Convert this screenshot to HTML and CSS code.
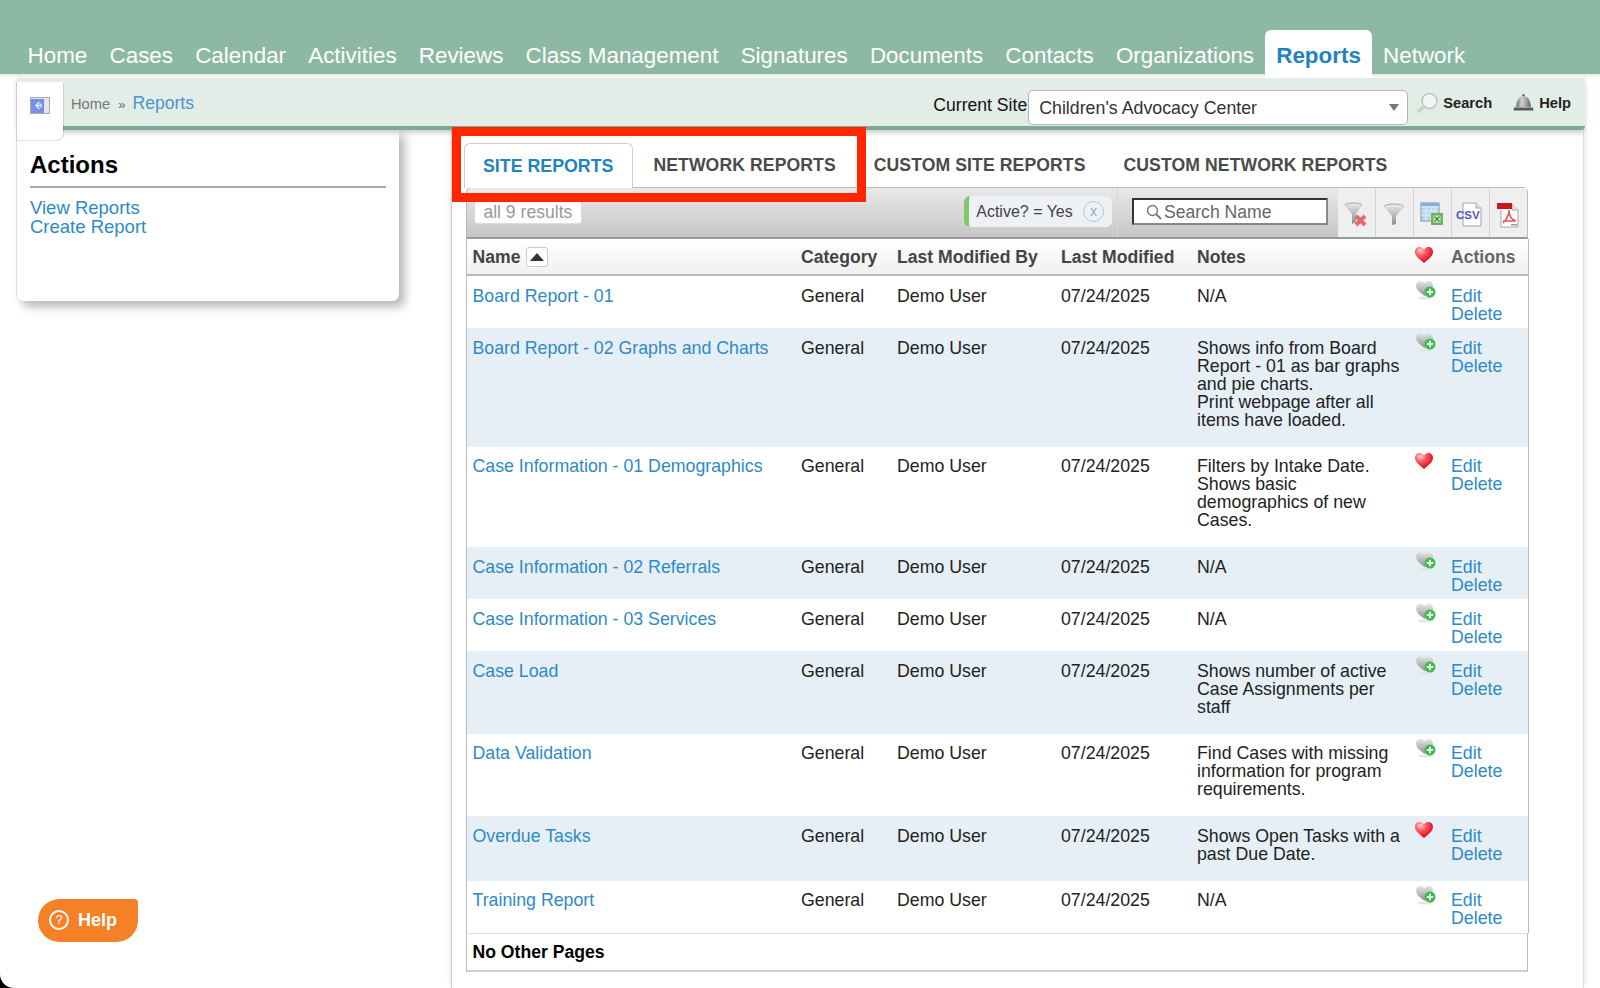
FILE: index.html
```html
<!DOCTYPE html>
<html lang="en">
<head>
<meta charset="utf-8">
<title>Reports</title>
<link rel="stylesheet" href="styles.css">
</head>
<body>
<svg class="defs" width="0" height="0" aria-hidden="true">
  <defs>
    <radialGradient id="redheart" cx=".3" cy=".22" r=".8"><stop offset="0" stop-color="#ffd0d2"/><stop offset=".35" stop-color="#f9646c"/><stop offset=".8" stop-color="#ea1f2c"/><stop offset="1" stop-color="#d8141f"/></radialGradient>
    <linearGradient id="grayheart" x1="0" y1="0" x2="0" y2="1"><stop offset="0" stop-color="#e8e8e8"/><stop offset="1" stop-color="#8f8f8f"/></linearGradient>
    <linearGradient id="funnel" x1="0" y1="0" x2="0" y2="1"><stop offset="0" stop-color="#dcdcdc"/><stop offset="1" stop-color="#8e8e8e"/></linearGradient>
    <linearGradient id="bell" x1="0" y1="0" x2="1" y2="0"><stop offset="0" stop-color="#6f6f72"/><stop offset=".4" stop-color="#d2d2d6"/><stop offset="1" stop-color="#65656a"/></linearGradient>
    <symbol id="heart-on" viewBox="0 0 18 16"><path d="M9 16C5 12.500 0 9.500 0 4.800 0 2 2.200 0 4.700 0 6.500 0 8.100 1 9 2.600 9.900 1 11.500 0 13.300 0 15.800 0 18 2 18 4.800 18 9.500 13 12.500 9 16Z" fill="url(#redheart)"/></symbol>
    <symbol id="heart-add" viewBox="0 0 20 20"><ellipse cx="9" cy="18" rx="7" ry="1.600" fill="#e6e6e6"/><path d="M8.500 16C5 13 0 10.500 0 5.300 0 2.600 2 .8 4.400 .8 6.200 .8 7.700 1.800 8.500 3.300 9.300 1.800 10.800 .8 12.600 .8 15 .8 17 2.600 17 5.300 17 10.500 12 13 8.500 16Z" fill="url(#grayheart)"/><circle cx="14" cy="12" r="5.500" fill="#3dbb4f"/><path d="M14 8.800v6.400M10.800 12h6.400" stroke="#eefaef" stroke-width="2"/></symbol>
  </defs>
</svg>
<div class="window">
  <header class="topnav">
    <nav class="tabs">
      <a class="tab" href="#">Home</a>
      <a class="tab" href="#">Cases</a>
      <a class="tab" href="#">Calendar</a>
      <a class="tab" href="#">Activities</a>
      <a class="tab" href="#">Reviews</a>
      <a class="tab" href="#">Class Management</a>
      <a class="tab" href="#">Signatures</a>
      <a class="tab" href="#">Documents</a>
      <a class="tab" href="#">Contacts</a>
      <a class="tab" href="#">Organizations</a>
      <a class="tab tab-active" href="#">Reports</a>
      <a class="tab" href="#">Network</a>
    </nav>
  </header>

  <div class="subbar">
    <div class="crumbs">
      <a class="crumb-home" href="#">Home</a>
      <span class="crumb-sep">»</span>
      <a class="crumb-current" href="#">Reports</a>
    </div>
    <div class="sitebox">
      <label class="site-label">Current Site</label>
      <div class="site-select">
        <span>Children's Advocacy Center</span>
        <span class="select-caret"></span>
      </div>
      <a class="util" href="#">
        <svg class="util-icon" width="21" height="20" viewBox="0 0 21 20"><circle cx="12.500" cy="8" r="7.500" fill="#f2f5f3" stroke="#bfc2bd" stroke-width="1.500"/><path d="M7 13.500 1.800 18.200" stroke="#cfd1c9" stroke-width="3.200" stroke-linecap="round"/></svg>
        Search
      </a>
      <a class="util util-help" href="#">
        <svg class="util-icon" width="21" height="17" viewBox="0 0 21 17"><circle cx="10.500" cy="1.500" r="1.500" fill="#6b6b6f"/><path d="M10.500 2C5.500 2.500 3.500 7 3 13H18C17.500 7 15.500 2.500 10.500 2Z" fill="url(#bell)"/><path d="M1 13.500H20L20.500 16.500H.5Z" fill="#59595c"/></svg>
        Help
      </a>
    </div>
  </div>

  <a class="panel-toggle" href="#" aria-label="Toggle panel">
    <svg width="20" height="17" viewBox="0 0 20 17"><rect x=".5" y=".5" width="19" height="16" fill="#e6e6e6" stroke="#aaa"/><rect x="1" y="2" width="13" height="14" fill="#7391e8"/><path d="M9.500 5 6 8.500 9.500 12M6 8.500h5M11 6.500v4" fill="none" stroke="#e6ebfb" stroke-width="1.400"/></svg>
  </a>

  <div class="content">
    <aside class="sidebar">
      <h2 class="side-title">Actions</h2>
      <div class="side-links">
        <a href="#">View Reports</a>
        <a href="#">Create Report</a>
      </div>
    </aside>

    <main class="main">
      <div class="report-tabs">
        <a class="rtab rtab-active" href="#">SITE REPORTS</a>
        <a class="rtab" href="#">NETWORK REPORTS</a>
        <a class="rtab" href="#">CUSTOM SITE REPORTS</a>
        <a class="rtab" href="#">CUSTOM NETWORK REPORTS</a>
      </div>

      <div class="grid">
        <div class="toolbar">
          <span class="count">all 9 results</span>
          <span class="chip">Active? = Yes <span class="chip-x">x</span></span>
          <div class="searchwrap">
            <div class="searchbox">
              <svg width="16" height="16" viewBox="0 0 16 16"><circle cx="6.500" cy="6.500" r="5" fill="none" stroke="#777" stroke-width="1.400"/><path d="M10 10l5 5" stroke="#777" stroke-width="1.800"/></svg>
              <span>Search Name</span>
            </div>
          </div>
          <div class="tools">
            <a class="tool" href="#" aria-label="Clear filters"><svg width="24" height="26" viewBox="0 0 24 26"><ellipse cx="9.500" cy="3" rx="8.500" ry="2" fill="#e4e4e4" stroke="#aaa"/><path d="M1 3.500H18L12 12V20L8 22V12Z" fill="url(#funnel)"/><path d="M12 14 21 23M21 14 12 23" stroke="#e5686a" stroke-width="4"/></svg></a>
            <a class="tool" href="#" aria-label="Filter"><svg width="22" height="24" viewBox="0 0 22 24"><ellipse cx="11" cy="3.500" rx="9.500" ry="2.500" fill="#e6e6e6" stroke="#a5a5a5"/><path d="M1.500 4 20.500 4 13 13V21L9 22V13Z" fill="url(#funnel)"/></svg></a>
            <a class="tool" href="#" aria-label="Export Excel"><svg width="24" height="25" viewBox="0 0 24 25"><rect x="1" y="1" width="18" height="18" fill="#b5d8f2" stroke="#8a8f94"/><path d="M1 5H19M1 9H19M1 13H19M6 1V19M11 1V19M15 1V19" stroke="#deedf8" stroke-width="1"/><rect x="1" y="1" width="18" height="3" fill="#7fb2da"/><rect x="11" y="11" width="12" height="12" fill="#6bb05c"/><rect x="13.500" y="13.500" width="7" height="7" fill="#d5ecc9"/><path d="M14.500 14.500 19.500 19.500M19.500 14.500 14.500 19.500" stroke="#3a8a30" stroke-width="1.300"/></svg></a>
            <a class="tool" href="#" aria-label="Export CSV"><svg width="28" height="25" viewBox="0 0 28 25"><path d="M7 1H20L25 6V24H7Z" fill="#fff" stroke="#a5a5a5"/><path d="M20 1V6H25" fill="#e5e5e5" stroke="#a5a5a5"/><text class="csv-text" x="0" y="17">CSV</text></svg></a>
            <a class="tool" href="#" aria-label="Export PDF"><svg width="24" height="26" viewBox="0 0 24 26"><path d="M5 2H16L22 8V25H5Z" fill="#fff" stroke="#a5a5a5"/><path d="M16 2V8H22" fill="#e8e8e8" stroke="#a5a5a5"/><rect x="1" y="1" width="15" height="6" fill="#c8161d"/><path d="M13 8C13 14 10 18 7 21M13 9C13 14 16 18 20 19M7 19H19" fill="none" stroke="#e0575b" stroke-width="1.600"/><rect x="15" y="22" width="6" height="1.500" fill="#999"/></svg></a>
          </div>
        </div>

        <table class="rtable">
          <colgroup>
            <col class="c-name"><col class="c-cat"><col class="c-by"><col class="c-date"><col class="c-notes"><col class="c-fav"><col class="c-act">
          </colgroup>
          <thead>
            <tr>
              <th><span class="th-name">Name <span class="sortbox"><span class="sort-arrow"></span></span></span></th>
              <th>Category</th>
              <th>Last Modified By</th>
              <th>Last Modified</th>
              <th>Notes</th>
              <th class="th-fav"><svg class="heart" width="18" height="16"><use href="#heart-on"/></svg></th>
              <th class="th-actions">Actions</th>
            </tr>
          </thead>
          <tbody>
            <tr>
              <td><a href="#">Board Report - 01</a></td><td>General</td><td>Demo User</td><td>07/24/2025</td>
              <td><p>N/A</p></td>
              <td class="fav"><svg class="heart heart-gray" width="20" height="20"><use href="#heart-add"/></svg></td>
              <td><a href="#">Edit</a><br><a href="#">Delete</a></td>
            </tr>
            <tr class="alt">
              <td><a href="#">Board Report - 02 Graphs and Charts</a></td><td>General</td><td>Demo User</td><td>07/24/2025</td>
              <td><p>Shows info from Board Report - 01 as bar graphs and pie charts.<br>Print webpage after all items have loaded.</p></td>
              <td class="fav"><svg class="heart heart-gray" width="20" height="20"><use href="#heart-add"/></svg></td>
              <td><a href="#">Edit</a><br><a href="#">Delete</a></td>
            </tr>
            <tr>
              <td><a href="#">Case Information - 01 Demographics</a></td><td>General</td><td>Demo User</td><td>07/24/2025</td>
              <td><p>Filters by Intake Date.<br>Shows basic demographics of new Cases.</p></td>
              <td class="fav"><svg class="heart" width="18" height="16"><use href="#heart-on"/></svg></td>
              <td><a href="#">Edit</a><br><a href="#">Delete</a></td>
            </tr>
            <tr class="alt">
              <td><a href="#">Case Information - 02 Referrals</a></td><td>General</td><td>Demo User</td><td>07/24/2025</td>
              <td><p>N/A</p></td>
              <td class="fav"><svg class="heart heart-gray" width="20" height="20"><use href="#heart-add"/></svg></td>
              <td><a href="#">Edit</a><br><a href="#">Delete</a></td>
            </tr>
            <tr>
              <td><a href="#">Case Information - 03 Services</a></td><td>General</td><td>Demo User</td><td>07/24/2025</td>
              <td><p>N/A</p></td>
              <td class="fav"><svg class="heart heart-gray" width="20" height="20"><use href="#heart-add"/></svg></td>
              <td><a href="#">Edit</a><br><a href="#">Delete</a></td>
            </tr>
            <tr class="alt">
              <td><a href="#">Case Load</a></td><td>General</td><td>Demo User</td><td>07/24/2025</td>
              <td><p>Shows number of active Case Assignments per staff</p></td>
              <td class="fav"><svg class="heart heart-gray" width="20" height="20"><use href="#heart-add"/></svg></td>
              <td><a href="#">Edit</a><br><a href="#">Delete</a></td>
            </tr>
            <tr>
              <td><a href="#">Data Validation</a></td><td>General</td><td>Demo User</td><td>07/24/2025</td>
              <td><p>Find Cases with missing information for program requirements.</p></td>
              <td class="fav"><svg class="heart heart-gray" width="20" height="20"><use href="#heart-add"/></svg></td>
              <td><a href="#">Edit</a><br><a href="#">Delete</a></td>
            </tr>
            <tr class="alt">
              <td><a href="#">Overdue Tasks</a></td><td>General</td><td>Demo User</td><td>07/24/2025</td>
              <td><p>Shows Open Tasks with a past Due Date.</p></td>
              <td class="fav"><svg class="heart" width="18" height="16"><use href="#heart-on"/></svg></td>
              <td><a href="#">Edit</a><br><a href="#">Delete</a></td>
            </tr>
            <tr>
              <td><a href="#">Training Report</a></td><td>General</td><td>Demo User</td><td>07/24/2025</td>
              <td><p>N/A</p></td>
              <td class="fav"><svg class="heart heart-gray" width="20" height="20"><use href="#heart-add"/></svg></td>
              <td><a href="#">Edit</a><br><a href="#">Delete</a></td>
            </tr>
          </tbody>
        </table>
        <div class="pages">No Other Pages</div>
      </div>
    </main>
  </div>

  <div class="annotation" aria-hidden="true"></div>

  <a class="help-float" href="#">
    <span class="help-circle">?</span>
    Help
  </a>
</div>
</body>
</html>
```

FILE: styles.css
```css
* { box-sizing: border-box; }

html, body {
  margin: 0;
  height: 988px;
  overflow: hidden;
  background: #000;
}

body {
  font-family: "Liberation Sans", Arial, sans-serif;
  font-size: 17.6px;
  line-height: 18px;
  color: #222;
}

a { color: #2e8ac6; text-decoration: none; }

.defs { position: absolute; }

.window {
  position: relative;
  height: 988px;
  background: #fff;
  border-bottom-left-radius: 14px;
  overflow: hidden;
}

/* top navigation */
.topnav {
  height: 74px;
  background: #8db8a3;
  padding-left: 16.5px;
  display: flex;
  align-items: flex-end;
  box-shadow: 0 2px 3px rgba(0, 0, 0, .1);
}

.tabs { display: flex; align-items: flex-end; position: relative; z-index: 3; }

.tab {
  display: block;
  height: 45px;
  padding: 0 11.1px;
  color: #fff;
  font-size: 22.4px;
  line-height: 54px;
  white-space: nowrap;
}

.tab-active {
  height: 48px;
  margin-bottom: -4px;
  line-height: 52px;
  background: #fff;
  color: #1f83c0;
  font-weight: bold;
  border-radius: 6px 6px 0 0;
}

/* breadcrumb bar */
.subbar {
  height: 52px;
  margin: 4px 15px 0 17px;
  padding: 0 14px 0 54px;
  background: #e3ede7;
  border-bottom: 4px solid #7aab93;
  border-radius: 0 0 4px 4px;
  box-shadow: 0 3px 5px rgba(0, 0, 0, .2);
  display: flex;
  align-items: center;
  justify-content: space-between;
  position: relative;
  z-index: 2;
}

.crumbs { display: flex; align-items: baseline; margin-top: 3px; }
.crumb-home { color: #777; font-size: 14.7px; }
.crumb-sep { color: #666; font-size: 13px; margin: 0 7px 0 8px; }
.crumb-current { font-size: 17.6px; color: #4a96cc; }

.sitebox { display: flex; align-items: center; margin-top: 8px; }
.site-label { color: #111; margin: -2px 1px 0 0; }

.site-select {
  width: 380px;
  height: 35px;
  padding: 0 8px 0 10px;
  margin: 3px 9px 0 0;
  background: #fff;
  border: 1px solid #b4b4b4;
  border-radius: 5px;
  display: flex;
  align-items: center;
  justify-content: space-between;
  color: #333;
  font-size: 17.8px;
}

.select-caret {
  width: 0;
  height: 0;
  border: 5px solid transparent;
  border-top: 7px solid #777;
  border-bottom: 0;
}

.util {
  display: flex;
  align-items: center;
  gap: 5px;
  margin-top: -7px;
  color: #222;
  font-size: 14.7px;
  font-weight: bold;
}

.util-help { margin-left: 21px; }

/* collapse tab that sits over the side panel */
.panel-toggle {
  position: absolute;
  left: 16px;
  top: 82px;
  z-index: 4;
  width: 47px;
  height: 58px;
  padding: 15px 0 0 13px;
  background: #fff;
  border-left: 1px solid #ccc;
  border-radius: 0 0 7px 0;
  box-shadow: 1px 1px 1px rgba(0, 0, 0, .12);
}

/* page body */
.content { display: flex; align-items: flex-start; height: 858px; }

.sidebar {
  width: 383px;
  height: 171px;
  margin-left: 16px;
  padding: 17px 13px 0 13px;
  background: #fff;
  border-left: 1px solid #ddd;
  border-radius: 0 0 7px 7px;
  box-shadow: 6px 6px 10px rgba(0, 0, 0, .28);
}

.side-title {
  margin: 0 0 11px;
  padding-bottom: 3px;
  border-bottom: 2px solid #aaa;
  color: #000;
  font-size: 24px;
  line-height: 36px;
}

.side-links a { display: block; font-size: 18.5px; line-height: 18.5px; }

.main {
  width: 1133px;
  height: 100%;
  margin-left: 52px;
  padding: 13px 56px 0 12.5px;
  background: #fff;
  border-left: 1px solid #ccc;
  border-right: 1px solid #ddd;
  box-shadow: -4px 0 6px -4px rgba(0, 0, 0, .12), 4px 0 6px -3px rgba(0, 0, 0, .12);
}

.report-tabs { display: flex; height: 44px; margin-left: -1px; }

.rtab {
  display: block;
  padding: 0 19px;
  line-height: 45px;
  color: #4a4a4a;
  font-weight: bold;
  font-size: 17.6px;
  letter-spacing: .1px;
  white-space: nowrap;
}

.rtab-active {
  height: 45px;
  padding: 0 18.5px;
  margin-right: 1.5px;
  line-height: 44px;
  font-size: 17.8px;
  letter-spacing: 0;
  color: #1f83c0;
  background: #fff;
  border: 1px solid #ccc;
  border-bottom: 0;
  border-radius: 6px 6px 0 0;
  position: relative;
  z-index: 1;
}

.grid { margin-left: 1px; width: 1062.5px; }

.toolbar {
  height: 52px;
  border: 1px solid #bbb;
  border-bottom: 2px solid #999;
  border-radius: 5px 5px 0 0;
  background: linear-gradient(#e9e9e9, #c6c6c6);
  display: flex;
  align-items: flex-start;
  padding: 13px 0 0 7px;
}

.count {
  width: 109px;
  height: 23px;
  text-align: center;
  line-height: 21px;
  background: #fff;
  border: 1px solid #ddd;
  border-radius: 3px;
  color: #999;
}

.chip {
  margin: -5px 0 0 382px;
  width: 148px;
  height: 31px;
  padding: 0 8px 0 7px;
  display: flex;
  align-items: center;
  justify-content: space-between;
  background: #eef1f3;
  border-left: 5px solid #80c86c;
  border-radius: 6px;
  color: #444;
  font-size: 16px;
}

.chip-x {
  width: 21px;
  height: 21px;
  border: 1px solid #a9c7de;
  border-radius: 50%;
  color: #8fb0c8;
  text-align: center;
  font-size: 14px;
  line-height: 18px;
}

.searchwrap {
  height: 49px;
  margin: -13px 0 0 5px;
  padding: 10px 0 0 14px;
  border-left: 1px solid #d6d6d6;
  width: 221.5px;
}

.searchbox {
  width: 196.5px;
  height: 27px;
  padding-left: 12px;
  background: #fff;
  border: 2px solid #333;
  border-right-color: #888;
  border-bottom-color: #888;
  display: flex;
  align-items: center;
  gap: 2px;
  color: #666;
}

.tools { display: flex; margin: -13px 0 0 0; }

.tool {
  width: 38px;
  height: 49px;
  background: #efefef;
  border-right: 1px solid #d4d4d4;
  display: flex;
  align-items: center;
  justify-content: center;
  padding-top: 4px;
}

.tool:last-child { border-right: 0; width: 37px; }

.csv-text {
  font-family: "Liberation Sans", sans-serif;
  font-size: 11.5px;
  font-weight: bold;
  fill: #5157c0;
}

.rtable {
  width: 100%;
  table-layout: fixed;
  border-collapse: collapse;
  border-left: 1px solid #bbb;
  border-right: 1px solid #bbb;
}

.c-name { width: 329px; }
.c-cat { width: 96px; }
.c-by { width: 164px; }
.c-date { width: 136px; }
.c-notes { width: 217px; }
.c-fav { width: 37px; }
.c-act { width: 83.5px; }

.rtable th {
  height: 36px;
  padding: 1px 6px 0;
  text-align: left;
  vertical-align: middle;
  color: #444;
  font-size: 17.6px;
  background: linear-gradient(#fff, #f0f0f0);
  border-bottom: 2px solid #bbb;
  white-space: nowrap;
}

.th-name { display: inline-flex; align-items: center; gap: 6px; margin-top: -3px; }

.sortbox {
  width: 22px;
  height: 20px;
  background: #fff;
  border: 1px solid #ccc;
  border-radius: 3px;
  display: flex;
  align-items: center;
  justify-content: center;
}

.sort-arrow {
  width: 0;
  height: 0;
  border: 7px solid transparent;
  border-bottom: 8px solid #333;
  border-top: 0;
}

.rtable .th-fav, .rtable .fav { padding: 0 0 0 7px; }
.rtable th.th-fav { vertical-align: top; padding-top: 8px; }
.rtable .th-actions { color: #666; }

.rtable td {
  padding: 10.5px 6px 5.5px;
  vertical-align: top;
  color: #222;
  font-size: 17.76px;
}

.rtable td.fav { padding: 6px 0 0 7px; }

.rtable p { margin: 0 0 12.5px; }
.rtable td a { color: #2e8ac6; }

.alt td { background: #e6eff6; }

.heart { display: block; }
.heart-gray { margin: -2px 0 0 1px; }

.pages {
  height: 39px;
  padding: 9px 6px 0;
  border: 1px solid #ddd;
  border-left-color: #bbb;
  border-right-color: #bbb;
  border-bottom: 2px solid #ccc;
  color: #000;
  font-weight: bold;
}

/* red marker drawn on the screenshot */
.annotation {
  position: absolute;
  left: 452px;
  top: 127px;
  width: 414px;
  height: 75px;
  z-index: 5;
  border: 9px solid #ff2600;
}

.help-float {
  position: absolute;
  left: 38px;
  top: 899px;
  z-index: 6;
  width: 100px;
  height: 43px;
  padding: 0 0 2px 11px;
  display: flex;
  align-items: center;
  gap: 9px;
  background: #f58025;
  color: #fff;
  font-size: 18px;
  font-weight: bold;
  border-radius: 22px 4px 22px 22px;
}

.help-circle {
  width: 20px;
  height: 20px;
  border: 2px solid #fff;
  border-radius: 50%;
  font-size: 13px;
  line-height: 16px;
  text-align: center;
  font-weight: normal;
}
```
